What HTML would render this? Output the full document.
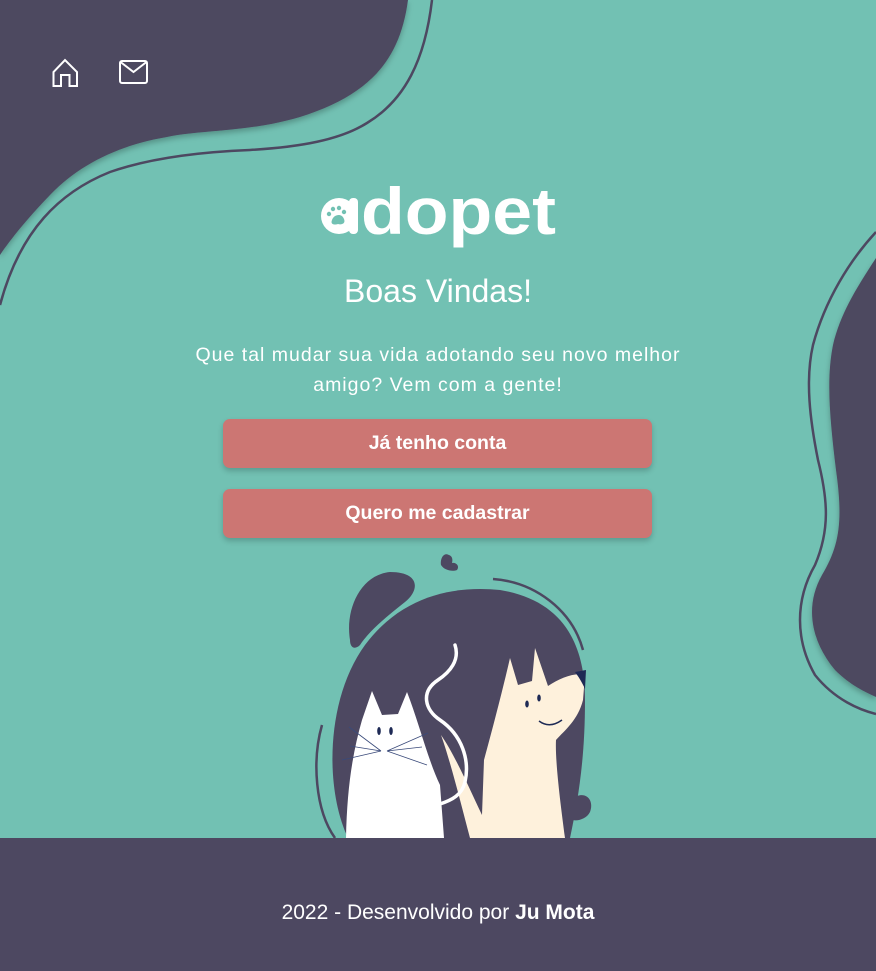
<!DOCTYPE html>
<html style="height:971px;overflow:hidden"><head><meta charset="utf-8"><style>
*{margin:0;padding:0;box-sizing:border-box}
body{width:876px;height:971px;background:#72C1B3;position:relative;overflow:hidden;font-family:"Liberation Sans",sans-serif;color:#fff}
svg.bg{position:absolute;left:0;top:0}
.title{position:absolute;top:273px;left:0;width:876px;text-align:center;font-size:32px;}
.p{position:absolute;top:340px;left:168px;width:540px;text-align:center;font-size:19.5px;line-height:30px;letter-spacing:1px}
.btn{position:absolute;left:223px;width:429px;height:49px;background:#CC7673;border-radius:7px;box-shadow:0 3px 6px rgba(0,0,0,.2);text-align:center;line-height:49px;font-weight:bold;font-size:19.5px}
footer{position:absolute;left:0;top:838px;width:876px;height:133px;background:#4D4861;text-align:center;font-size:21px;line-height:150px}
</style></head><body>
<svg class="bg" width="876" height="971" viewBox="0 0 876 971">
<defs><filter id="sh"><feDropShadow dx="0" dy="3" stdDeviation="3" flood-opacity="0.25"/></filter></defs>
<path d="M0 0 L408 0 C400 60 370 95 300 117 C250 132 200 130 167 137 C120 145 83 163 55 190 C30 215 10 240 0 255 Z" fill="#4D4861" filter="url(#sh)"/>
<path d="M432 0 C425 60 405 100 367 123 C340 140 300 147 250 150 C200 152 150 158 110 172 C60 192 20 230 0 305" fill="none" stroke="#4D4861" stroke-width="2.5"/>
<path d="M876 258 C855 290 840 315 833 345 C826 380 830 420 836 470 C843 520 840 545 822 575 C805 605 810 640 835 670 C850 685 865 692 876 697 Z" fill="#4D4861" filter="url(#sh)"/>
<path d="M876 232 C850 260 825 300 813 345 C805 380 810 420 818 460 C828 500 830 530 815 565 C795 600 795 640 815 675 C835 700 860 710 876 714" fill="none" stroke="#4D4861" stroke-width="2.5"/>
<path d="M53.5 86 V72 L65 60 L77 72 V86 H69.5 V75 H61 V86 Z" fill="none" stroke="#fff" stroke-width="2"/>
<rect x="120" y="61" width="27" height="22" rx="2" fill="none" stroke="#fff" stroke-width="2"/>
<path d="M120.5 62 L133.5 72 L146.5 62" fill="none" stroke="#fff" stroke-width="2"/>
<circle cx="339" cy="216" r="18" fill="#fff"/>
<rect x="349" y="198" width="9" height="36" rx="4" fill="#fff"/>
<g fill="#72C1B3"><path d="M332 220 C334 214 342 213 344 219 C346 224 341 225 338 224 C335 225 330 225 332 220 Z"/><circle cx="329" cy="214" r="2.2"/><circle cx="333" cy="209" r="2.2"/><circle cx="339" cy="208" r="2.2"/><circle cx="344" cy="212" r="2.2"/></g>
<text x="361" y="234" font-family="Liberation Sans" font-weight="bold" font-size="66" fill="#fff" textLength="195" lengthAdjust="spacingAndGlyphs">dopet</text>
<g fill="#4D4861">
<path d="M348 838 C325 790 325 700 365 645 C400 598 450 585 500 590 C560 600 585 640 585 700 C585 760 578 800 570 838 Z"/>
<path d="M350 640 C345 610 360 575 390 572 C420 572 420 590 405 602 C385 618 370 630 360 645 C355 650 350 648 350 640 Z"/>
<path d="M449 555 C444 552 440 558 441 565 C444 570 452 572 457 570 C460 566 456 562 452 563 C453 559 452 556 449 555 Z"/>
<path d="M577 796 C588 792 594 802 590 812 C586 820 575 822 570 819 C568 812 572 806 577 796 Z"/>
</g>
<path d="M493 579 C535 582 572 610 583 650" fill="none" stroke="#4D4861" stroke-width="2.5"/>
<path d="M322 725 C312 760 315 810 335 838" fill="none" stroke="#4D4861" stroke-width="2.5"/>
<path d="M346 838 C347 790 352 755 362 720 L372 691 L382 715 L398 714 L407 692 C418 720 428 760 440 785 L444 838 Z" fill="#fff"/>
<ellipse cx="379" cy="731" rx="1.8" ry="4" fill="#1E2A55"/><ellipse cx="391" cy="731" rx="1.8" ry="4" fill="#1E2A55"/>
<g stroke="#3A4A7A" stroke-width="0.8"><path d="M349 727 L381 751 M350 746 L381 751 M342 760 L381 751 M387 751 L428 733 M387 751 L422 747 M387 751 L427 765"/></g>
<path d="M441 735 C450 760 460 800 470 838 L565 838 C560 800 555 760 556 740 C565 730 578 720 583 700 L585 675 C575 672 560 678 548 686 L535 648 L532 681 L518 685 L510 658 C505 680 495 720 484 760 L482 815 C470 790 455 755 441 735 Z" fill="#FEF1DC"/>
<path d="M575 672 L586 670 L585 689 C582 682 578 676 575 672 Z" fill="#1E2A55"/>
<ellipse cx="527" cy="704" rx="1.8" ry="3.5" fill="#1E2A55"/><ellipse cx="539" cy="698" rx="1.8" ry="3.5" fill="#1E2A55"/>
<path d="M539 721 C547 727 555 725 562 720" fill="none" stroke="#1E2A55" stroke-width="1.5"/>
<path d="M455 645 C460 660 450 672 438 680 C420 692 425 710 440 720 C462 735 470 760 465 782 C462 795 452 800 440 804" fill="none" stroke="#fff" stroke-width="3.5" stroke-linecap="round"/>
</svg>
<div class="title">Boas Vindas!</div>
<div class="p">Que tal mudar sua vida adotando seu novo melhor amigo? Vem com a gente!</div>
<div class="btn" style="top:419px">Já tenho conta</div>
<div class="btn" style="top:489px">Quero me cadastrar</div>
<footer>2022 - Desenvolvido por <b>Ju Mota</b></footer>
</body></html>
